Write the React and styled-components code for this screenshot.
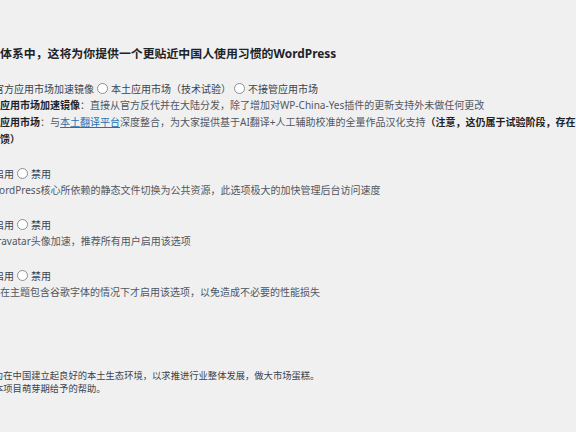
import React from 'react';
import styled, { createGlobalStyle } from 'styled-components';

const GlobalStyle = createGlobalStyle`
  html, body {
    margin: 0;
    padding: 0;
    background: #f0f0f1;
  }
  body {
    font-family: "Noto Sans", "Noto Sans CJK SC", sans-serif;
    color: #3c434a;
  }
`;

const Page = styled.div`
  width: 576px;
  height: 432px;
  overflow: hidden;
  box-sizing: border-box;
  padding-top: 43px;
`;

const Lead = styled.p`
  margin: 0;
  font-size: 11.9px;
  font-weight: 700;
  line-height: 20px;
  color: #1d2327;
  white-space: nowrap;
`;

// the label column of the form table sits off the left edge
const FormTable = styled.div`
  margin: 16px 0 0 -20px;
  display: flex;
  flex-direction: column;
  gap: 16px;
`;

const Row = styled.div`
  display: flex;
  flex-direction: column;
`;

const Options = styled.div`
  display: flex;
  align-items: center;
  gap: 3px;
  height: 18px;
  font-size: 10px;
  white-space: nowrap;
  color: #3c434a;
`;

const Option = styled.label`
  display: inline-flex;
  align-items: center;
  gap: 3px;
`;

const Radio = styled.span`
  position: relative;
  flex: none;
  width: 11px;
  height: 11px;
  box-sizing: border-box;
  border-radius: 50%;
  border: 1px solid #8c8f94;
  background: #fff;

  &::after {
    content: '';
    display: ${(p) => (p.$checked ? 'block' : 'none')};
    position: absolute;
    inset: 2px;
    border-radius: 50%;
    background: #3582c4;
  }
`;

const Desc = styled.p`
  margin: 0;
  font-size: 10px;
  line-height: 17px;
  color: #50575e;
  white-space: nowrap;
`;

const Strong = styled.b`
  font-weight: 700;
  color: #1d2327;
`;

const Link = styled.a`
  color: #2271b1;
  text-decoration: underline;
`;

const Footer = styled.div`
  margin: 68px 0 0 -6px;
  font-size: 9.3px;
  line-height: 13px;
  color: #3c434a;
  white-space: nowrap;
`;

const Choice = ({ label, checked }) => (
  <Option>
    <Radio $checked={checked} />
    {label}
  </Option>
);

const Toggle = () => (
  <Options>
    <Choice label="启用" checked />
    <Choice label="禁用" />
  </Options>
);

export default function App() {
  return (
    <>
      <GlobalStyle />
      <Page>
        <Lead>体系中，这将为你提供一个更贴近中国人使用习惯的WordPress</Lead>

        <FormTable>
          <Row>
            <Options>
              <Choice label="官方应用市场加速镜像" checked />
              <Choice label="本土应用市场（技术试验）" />
              <Choice label="不接管应用市场" />
            </Options>
            <Desc>
              <Strong>官方应用市场加速镜像</Strong>：直接从官方反代并在大陆分发，除了增加对WP-China-Yes插件的更新支持外未做任何更改
            </Desc>
            <Desc>
              <Strong>本土应用市场</Strong>：与<Link href="#">本土翻译平台</Link>深度整合，为大家提供基于AI翻译+人工辅助校准的全量作品汉化支持
              <Strong>（注意，这仍属于试验阶段，存在可能的问题，如有问题</Strong>
            </Desc>
            <Desc>
              <Strong>请反馈）</Strong>
            </Desc>
          </Row>

          <Row>
            <Toggle />
            <Desc>将WordPress核心所依赖的静态文件切换为公共资源，此选项极大的加快管理后台访问速度</Desc>
          </Row>

          <Row>
            <Toggle />
            <Desc>为Gravatar头像加速，推荐所有用户启用该选项</Desc>
          </Row>

          <Row>
            <Toggle />
            <Desc>只有在主题包含谷歌字体的情况下才启用该选项，以免造成不必要的性能损失</Desc>
          </Row>
        </FormTable>

        <Footer>
          <div>为在中国建立起良好的本土生态环境，以求推进行业整体发展，做大市场蛋糕。</div>
          <div>本项目萌芽期给予的帮助。</div>
        </Footer>
      </Page>
    </>
  );
}
